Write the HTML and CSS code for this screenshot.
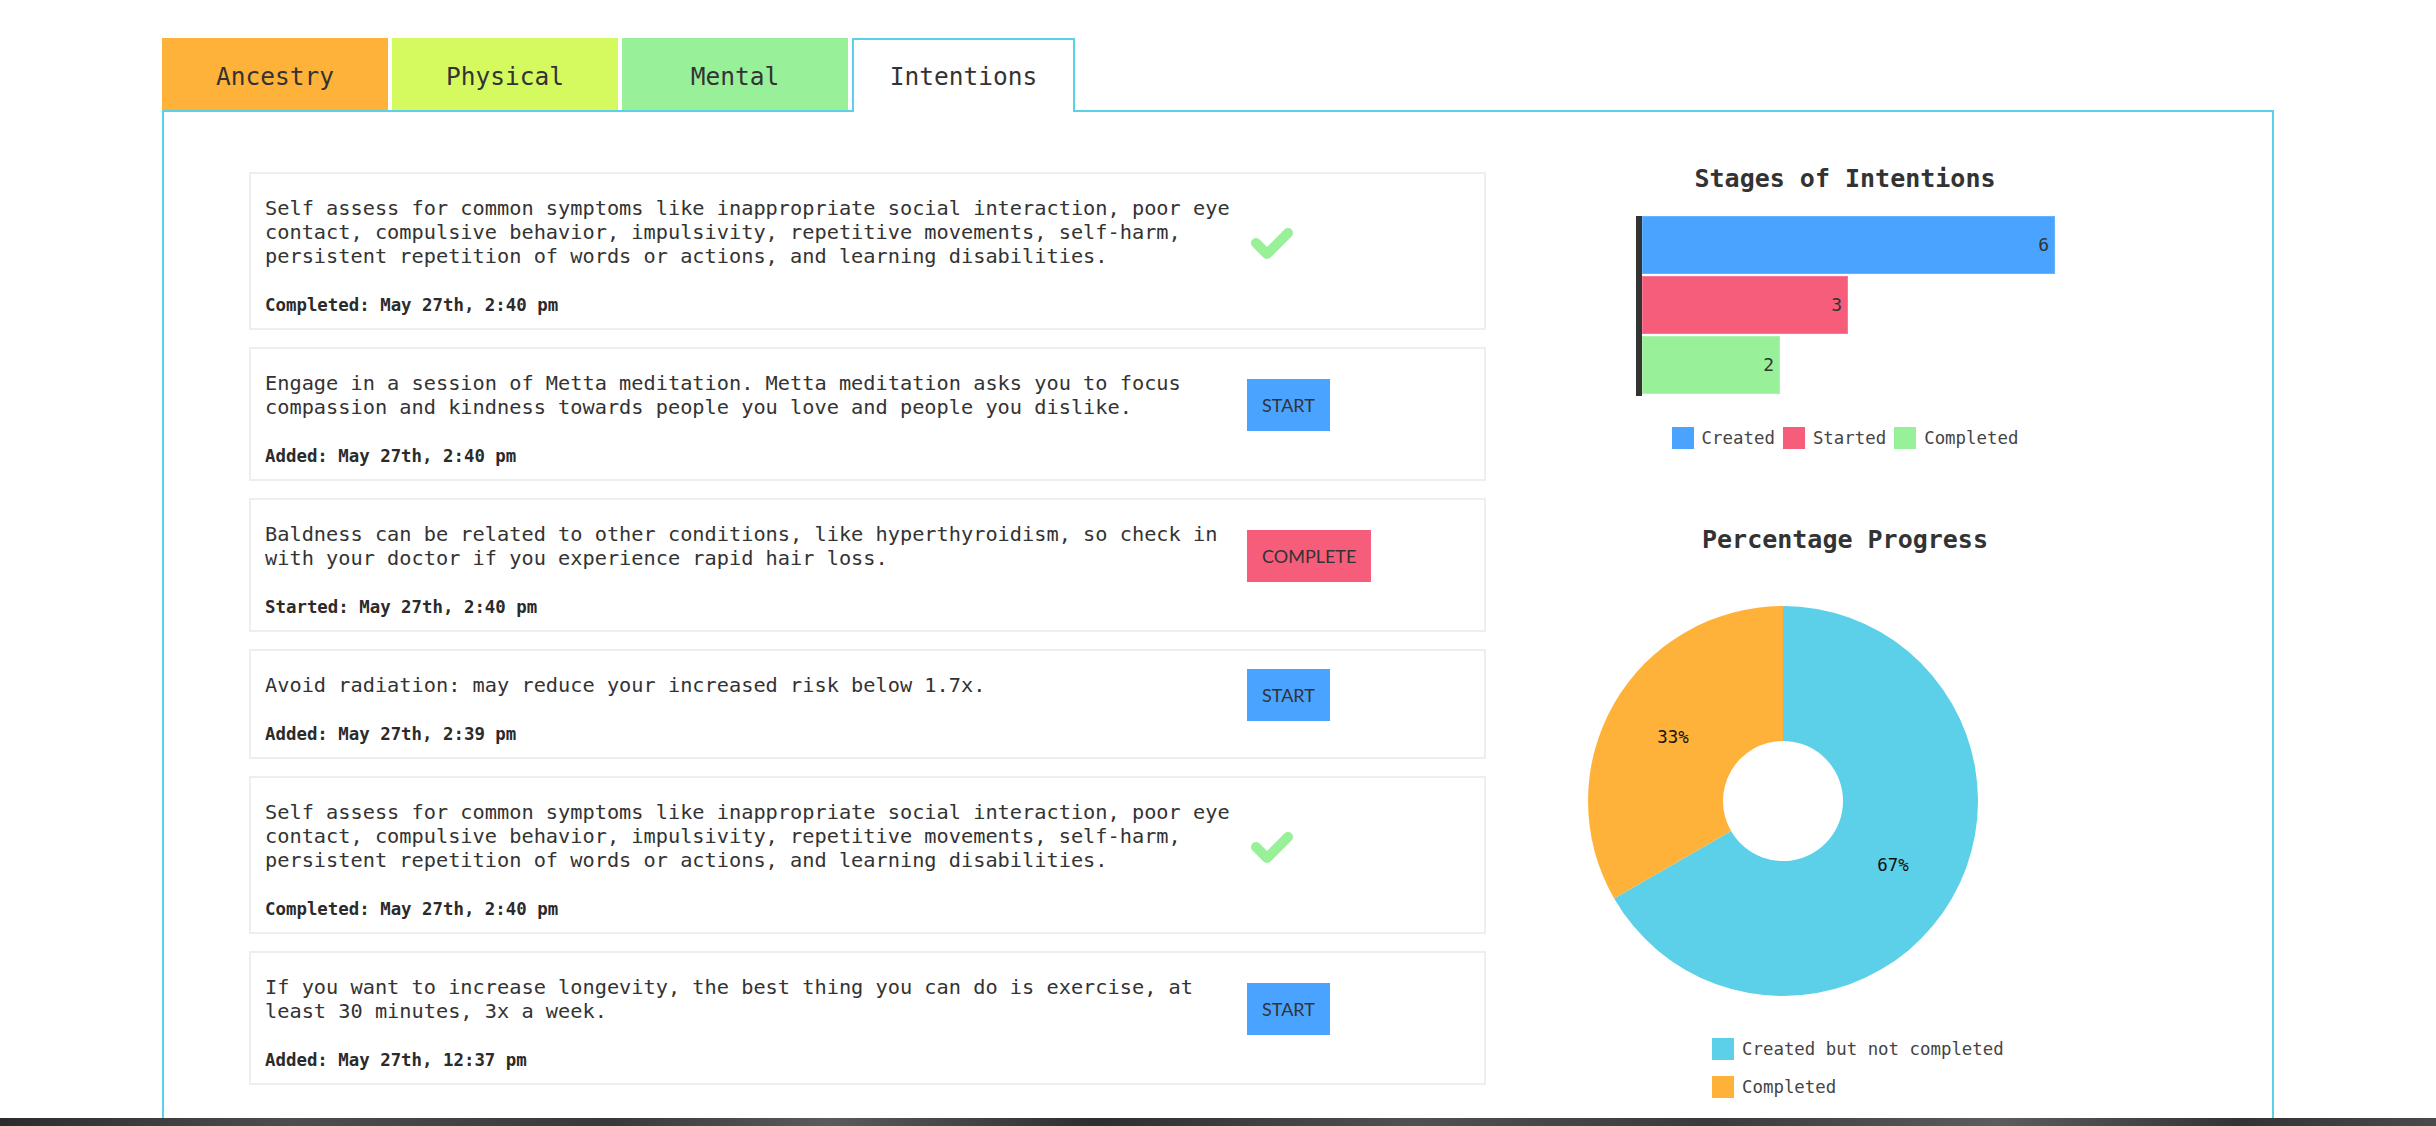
FILE: index.html
```html
<!DOCTYPE html>
<html>
<head>
<meta charset="utf-8">
<title>Intentions</title>
<link rel="stylesheet" href="styles.css">
</head>
<body>
<div class="page">
  <div class="tabs">
    <div class="tab tab-ancestry">Ancestry</div>
    <div class="tab tab-physical">Physical</div>
    <div class="tab tab-mental">Mental</div>
    <div class="tab tab-active">Intentions</div>
  </div>
  <div class="panel">
    <div class="list">
      <div class="card">
        <div class="card-row">
          <p class="desc">Self assess for common symptoms like inappropriate social interaction, poor eye contact, compulsive behavior, impulsivity, repetitive movements, self-harm, persistent repetition of words or actions, and learning disabilities.</p>
          <svg class="check" width="44" height="34" viewBox="0 0 44 34"><polyline points="6,16 17,27 38,6" fill="none" stroke="#98f099" stroke-width="10" stroke-linecap="round" stroke-linejoin="round"/></svg>
        </div>
        <div class="date">Completed: May 27th, 2:40 pm</div>
      </div>
      <div class="card">
        <div class="card-row">
          <p class="desc">Engage in a session of Metta meditation. Metta meditation asks you to focus compassion and kindness towards people you love and people you dislike.</p>
          <button class="btn btn-start">START</button>
        </div>
        <div class="date">Added: May 27th, 2:40 pm</div>
      </div>
      <div class="card">
        <div class="card-row">
          <p class="desc">Baldness can be related to other conditions, like hyperthyroidism, so check in with your doctor if you experience rapid hair loss.</p>
          <button class="btn btn-complete">COMPLETE</button>
        </div>
        <div class="date">Started: May 27th, 2:40 pm</div>
      </div>
      <div class="card">
        <div class="card-row">
          <p class="desc">Avoid radiation: may reduce your increased risk below 1.7x.</p>
          <button class="btn btn-start">START</button>
        </div>
        <div class="date">Added: May 27th, 2:39 pm</div>
      </div>
      <div class="card">
        <div class="card-row">
          <p class="desc">Self assess for common symptoms like inappropriate social interaction, poor eye contact, compulsive behavior, impulsivity, repetitive movements, self-harm, persistent repetition of words or actions, and learning disabilities.</p>
          <svg class="check" width="44" height="34" viewBox="0 0 44 34"><polyline points="6,16 17,27 38,6" fill="none" stroke="#98f099" stroke-width="10" stroke-linecap="round" stroke-linejoin="round"/></svg>
        </div>
        <div class="date">Completed: May 27th, 2:40 pm</div>
      </div>
      <div class="card">
        <div class="card-row">
          <p class="desc">If you want to increase longevity, the best thing you can do is exercise, at least 30 minutes, 3x a week.</p>
          <button class="btn btn-start">START</button>
        </div>
        <div class="date">Added: May 27th, 12:37 pm</div>
      </div>
    </div>

    <div class="charts">
      <h2 class="chart-title">Stages of Intentions</h2>
      <div class="bars">
        <div class="bar bar-created" style="width:413px">6</div>
        <div class="bar bar-started" style="width:206px">3</div>
        <div class="bar bar-completed" style="width:138px">2</div>
      </div>
      <div class="legend">
        <div class="legend-item"><span class="swatch sw-blue"></span>Created</div>
        <div class="legend-item"><span class="swatch sw-pink"></span>Started</div>
        <div class="legend-item"><span class="swatch sw-green"></span>Completed</div>
      </div>

      <h2 class="chart-title title-two">Percentage Progress</h2>
      <svg class="donut" width="390" height="390" viewBox="0 0 390 390">
        <path d="M195,0 A195,195 0 1 1 26.13,292.5 L143.04,225 A60,60 0 1 0 195,135 Z" fill="#5bd0e8"/>
        <path d="M26.13,292.5 A195,195 0 0 1 195,0 L195,135 A60,60 0 0 0 143.04,225 Z" fill="#ffb239"/>
        <text class="donut-label" x="85" y="131">33%</text>
        <text class="donut-label" x="305" y="259">67%</text>
      </svg>
      <div class="legend-col">
        <div class="legend-item"><span class="swatch sw-cyan"></span>Created but not completed</div>
        <div class="legend-item"><span class="swatch sw-orange"></span>Completed</div>
      </div>
    </div>
  </div>
</div>
</body>
</html>
```
FILE: styles.css
```css
html, body {
  margin: 0;
  padding: 0;
}

body {
  width: 2436px;
  height: 1126px;
  overflow: hidden;
  font-family: "DejaVu Sans Mono", "Liberation Mono", monospace;
  color: #333;
  background: linear-gradient(90deg, #2c2c2c 0%, #4d4d4d 12%, #383838 25%, #5a5a5a 34%, #2e2e2e 45%, #505050 58%, #3a3a3a 70%, #5c5c5c 82%, #333 92%, #4a4a4a 100%);
}

.page {
  background: #fff;
  height: 1118px;
  overflow: hidden;
  box-sizing: border-box;
  padding: 38px 0 0 162px;
}

/* Tabs */
.tabs {
  display: flex;
  gap: 4px;
  height: 72px;
  position: relative;
  z-index: 1;
}

.tab {
  width: 226px;
  height: 72px;
  box-sizing: border-box;
  padding-top: 4px;
  display: flex;
  align-items: center;
  justify-content: center;
  font-size: 24.5px;
  color: #333;
}

.tab-ancestry { background: #ffb239; }
.tab-physical { background: #d5fa5f; }
.tab-mental { background: #98f099; }

.tab-active {
  width: 223px;
  height: 74px;
  padding-top: 0;
  background: #fff;
  border: 2px solid #5bd0e8;
  border-bottom: none;
}

/* Panel */
.panel {
  width: 2112px;
  height: 1100px;
  box-sizing: border-box;
  border: 2px solid #5bd0e8;
  display: flex;
  align-items: flex-start;
  padding-left: 85px;
}

.list {
  width: 1237px;
  padding-top: 60px;
  display: flex;
  flex-direction: column;
  gap: 17px;
}

.card {
  border: 2px solid #eeeeee;
  padding: 22px 14px 13px 14px;
}

.card-row {
  display: flex;
  align-items: center;
}

.desc {
  flex: 0 0 970px;
  margin: 0 0 15px 0;
  font-size: 20.3px;
  line-height: 24px;
  color: #333;
}

.date {
  margin-top: 12px;
  font-size: 17.4px;
  line-height: 20px;
  font-weight: bold;
  color: #2b2b2b;
}

.btn {
  margin: -8px 0 -12px 12px;
  height: 52px;
  padding: 0 15px;
  border: none;
  font-family: Lato, "Liberation Sans", sans-serif;
  font-size: 18px;
  line-height: 52px;
  color: #333;
}

.btn-start { background: #4aa3ff; }
.btn-complete { background: #f65d7a; }

.check {
  margin-left: 15px;
  margin-top: 8px;
  display: block;
}

/* Charts */
.charts {
  width: 530px;
  margin-left: 94px;
  padding-top: 52px;
  display: flex;
  flex-direction: column;
}

.chart-title {
  margin: 0;
  font-size: 25px;
  line-height: 29px;
  font-weight: bold;
  text-align: center;
  color: #333;
}

.bars {
  margin: 23px 0 0 56px;
  border-left: 6px solid #333;
  padding-bottom: 2px;
  display: flex;
  flex-direction: column;
  gap: 2px;
}

.bar {
  height: 58px;
  box-sizing: border-box;
  line-height: 56px;
  text-align: right;
  padding-right: 5px;
  font-size: 18px;
  color: #333;
}

.bar-created { background: #4aa3ff; border: 1px solid #66b3ff; }
.bar-started { background: #f65d7a; border: 1px solid #f87a92; }
.bar-completed { background: #98f099; border: 1px solid #aef4ae; }

.legend {
  margin-top: 31px;
  display: flex;
  justify-content: center;
  gap: 8px;
}

.legend-item {
  display: flex;
  align-items: center;
  gap: 8px;
  font-size: 17.4px;
  line-height: 22px;
  color: #444;
}

.swatch {
  width: 22px;
  height: 22px;
  display: block;
}

.sw-blue { background: #4aa3ff; }
.sw-pink { background: #f65d7a; }
.sw-green { background: #98f099; }
.sw-cyan { background: #5bd0e8; }
.sw-orange { background: #ffb239; }

.title-two {
  margin-top: 76px;
}

.donut {
  display: block;
  margin: 52px 0 0 8px;
}

.donut-label {
  font-family: "DejaVu Sans Mono", monospace;
  font-size: 17.4px;
  fill: #111;
  text-anchor: middle;
  dominant-baseline: central;
}

.legend-col {
  margin: 42px 0 0 132px;
  display: flex;
  flex-direction: column;
  gap: 16px;
}
```
